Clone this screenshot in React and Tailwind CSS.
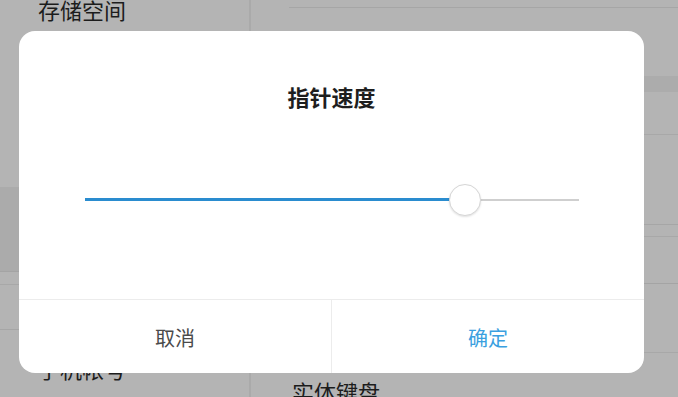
import React from 'react'

const font = { fontFamily: '"Noto Sans CJK SC", "Noto Sans", sans-serif' }

function Slider({ value = 77 }) {
  return (
    <div className="relative h-[32px] w-full">
      <div className="absolute left-0 right-0 top-[15px] h-[2px] bg-[#cfcfcf]" />
      <div
        className="absolute left-0 top-[14px] h-[3px] bg-[#2a8ccf]"
        style={{ width: `${value}%` }}
      />
      <div
        className="absolute top-0 h-[32px] w-[32px] -translate-x-1/2 rounded-full border border-[#d6d6d6] bg-white shadow-[0_1px_2px_rgba(0,0,0,0.12)]"
        style={{ left: `${value}%` }}
      />
    </div>
  )
}

export default function App() {
  return (
    <div className="relative h-[397px] w-[678px] overflow-hidden bg-[#b4b4b4]" style={font}>
      {/* dimmed settings page behind */}
      <div className="flex h-full">
        <div className="flex w-[251px] shrink-0 flex-col border-r-2 border-[#aaaaaa] [&>*]:shrink-0">
          <div className="-mt-[6px] h-[193px] pl-[38px] text-[22px] leading-[30px] text-[#1c1c1c]">存储空间</div>
          <div className="h-[85px] border-b border-[#a4a4a4] bg-[#ababab]" />
          <div className="h-[13px] border-b border-[#a8a8a8]" />
          <div className="h-[45px] border-b border-[#a6a6a6]" />
          <div className="pl-[38px] pt-[23px] text-[22px] leading-[30px] text-[#1c1c1c]">手机帐号</div>
        </div>
        <div className="flex flex-1 flex-col [&>*]:shrink-0">
          <div className="ml-[38px] h-[8px] border-b border-[#a6a6a6]" />
          <div className="h-[68px]" />
          <div className="h-[16px] bg-[#acacac]" />
          <div className="h-[43px] border-b border-[#a8a8a8]" />
          <div className="h-[90px] border-b border-[#a6a6a6]" />
          <div className="h-[12px] border-b border-[#a8a8a8]" />
          <div className="h-[47px] border-b border-[#a4a4a4]" />
          <div className="h-[69px] border-b border-[#a8a8a8]" />
          <div className="pl-[41px] pt-[23px] text-[22px] leading-[30px] text-[#1c1c1c]">实体键盘</div>
        </div>
      </div>

      {/* dialog */}
      <div className="absolute left-[19px] top-[31px] flex h-[342px] w-[625px] flex-col overflow-hidden rounded-[16px] bg-white">
        <div className="pt-[50px] text-center text-[22px] font-semibold leading-[30px] text-[#1e1e1e]">指针速度</div>
        <div className="flex h-[188px] items-center pb-[10px] pl-[66px] pr-[65px]">
          <Slider value={77} />
        </div>
        <div className="flex flex-1 border-t border-[#ececec]">
          <button className="flex flex-1 items-center justify-center pt-[3px] text-[20px] text-[#4a4a4a]">取消</button>
          <div className="w-px bg-[#ececec]" />
          <button className="flex flex-1 items-center justify-center pt-[3px] text-[20px] text-[#3a9fe0]">确定</button>
        </div>
      </div>
    </div>
  )
}
